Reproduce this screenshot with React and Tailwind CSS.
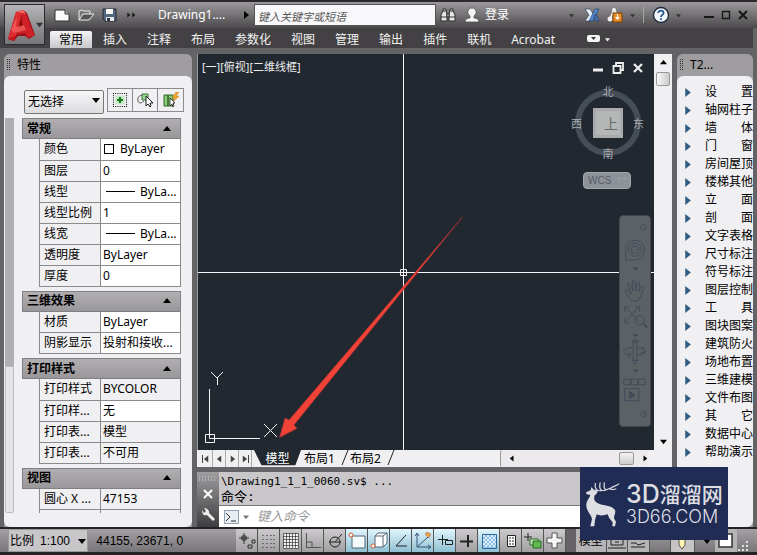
const ribbonTabs = ['常用', '插入', '注释', '布局', '参数化', '视图', '管理', '输出', '插件', '联机', 'Acrobat']

const sections = [
  {
    title: '常规',
    rows: [
      ['颜色', 'ByLayer', 'swatch'],
      ['图层', '0'],
      ['线型', 'ByLa...', 'line'],
      ['线型比例', '1'],
      ['线宽', 'ByLa...', 'line'],
      ['透明度', 'ByLayer'],
      ['厚度', '0'],
    ],
  },
  {
    title: '三维效果',
    rows: [
      ['材质', 'ByLayer'],
      ['阴影显示', '投射和接收...'],
    ],
  },
  {
    title: '打印样式',
    rows: [
      ['打印样式', 'BYCOLOR', 'readonly'],
      ['打印样...', '无'],
      ['打印表...', '模型', 'readonly'],
      ['打印表...', '不可用', 'readonly'],
    ],
  },
  {
    title: '视图',
    rows: [
      ['圆心 X ...', '47153', 'readonly'],
      ['圆心 Y ...', '21604', 'readonly'],
    ],
  },
]

const menuItems = [
  '设置', '轴网柱子', '墙体', '门窗', '房间屋顶', '楼梯其他', '立面', '剖面', '文字表格', '尺寸标注', '符号标注',
  '图层控制', '工具', '图块图案', '建筑防火', '场地布置', '三维建模', '文件布图', '其它', '数据中心', '帮助演示',
]

function Triangle({ dir = 'down', className = '' }) {
  const shapes = {
    down: '0,2 8,2 4,7',
    up: '0,6 8,6 4,1',
    right: '2,0 7,4 2,8',
    left: '6,0 1,4 6,8',
  }
  return (
    <svg viewBox="0 0 8 8" className={`shrink-0 ${className}`} fill="currentColor">
      <polygon points={shapes[dir]} />
    </svg>
  )
}

function Grip() {
  return (
    <svg className="h-3 w-1 shrink-0" viewBox="0 0 4 12" fill="#333">
      {[0, 2, 4, 6, 8, 10].map((y) => (
        <g key={y}>
          <rect x="0" y={y} width="1" height="1" />
          <rect x="2" y={y} width="1" height="1" />
        </g>
      ))}
    </svg>
  )
}

function AppButton() {
  return (
    <button
      aria-label="菜单"
      className="absolute left-1 top-1 flex h-[41px] w-[41px] items-center border border-[#2c2b2d] bg-linear-to-b from-[#b5b4b6] to-[#767577] pl-[3px]"
    >
      <svg className="h-[34px] w-[27px]" viewBox="0 0 27 34">
        <path d="M8 4 L15 2 L19 5 L27 27 L21 31 L17 28 L10 28 L6 33 L0 31Z" fill="#9d1016" />
        <path d="M8 4 L14 5 L8 28 L0 31Z" fill="#dd2b2f" />
        <path d="M14 5 L18 6 L26 27 L20 30 L17 25 L9 26 L10 21 L14 20Z" fill="#cf2228" />
        <path d="M8 4 L15 2 L18 6 L14 5Z" fill="#ff6763" />
        <path d="M3 22 L9 8 L8 19 L16 17 L18 22 L6 25Z" fill="#f2625f" opacity=".75" />
        <path d="M13 11L15 17L11 18Z" fill="#8d1015" />
        <path d="M0 31 L8 28 L6 33Z" fill="#c3161c" />
      </svg>
      <Triangle className="ml-px h-[7px] w-[7px] text-[#333]" />
    </button>
  )
}

function TitleBar() {
  return (
    <div className="flex h-7 items-center border-t-2 border-[#2d282d] bg-linear-to-b from-[#9b999c] via-[#747275] to-[#4b494c] pl-[54px] pr-2 text-white">
      <div className="flex w-16 justify-between">
        <button aria-label="新建">
          <svg className="h-4 w-4" viewBox="0 0 16 16">
            <path d="M1 3h10l4 4v7H1z" fill="#fafafa" stroke="#333" />
            <path d="M11 3v4h4" fill="#bbb" stroke="#333" />
          </svg>
        </button>
        <button aria-label="打开">
          <svg className="h-4 w-4" viewBox="0 0 16 16">
            <path d="M1 13V4l3-1 2 1h6v3" fill="#777" stroke="#eee" />
            <path d="M1 13l4-6h11l-5 6z" fill="#555" stroke="#eee" />
          </svg>
        </button>
        <button aria-label="保存">
          <svg className="h-4 w-4" viewBox="0 0 16 16">
            <path d="M1 2h13v12H3l-2-2z" fill="#52667d" stroke="#222a35" />
            <path d="M4 2h7v5H4z" fill="#f6f6f6" />
            <path d="M4 10h8v4H4z" fill="#e5e5e5" />
            <path d="M5 11h3v3H5z" fill="#334" />
          </svg>
        </button>
      </div>
      <button aria-label="更多" className="ml-2 flex text-[#171717]">
        <Triangle dir="right" className="h-[6px] w-[5px]" />
        <Triangle dir="right" className="h-[6px] w-[5px]" />
      </button>
      <span className="ml-[22px] w-[82px] text-[12px]">Drawing1....</span>
      <Triangle dir="right" className="ml-[2px] h-2 w-2 text-black" />
      <input
        aria-label="搜索"
        placeholder="键入关键字或短语"
        className="ml-1 h-[22px] min-w-0 flex-1 border border-[#555] bg-[#f8f7f9] px-[3px] pt-[2px] text-[11px] italic text-black placeholder:text-[#555]"
      />
      <button aria-label="查找" className="ml-1">
        <svg className="h-4 w-4" viewBox="0 0 16 16" fill="#e6e6e6" stroke="#222" strokeWidth=".9">
          <path d="M3 2h3v2l1 3v7H1V8l2-4zM10 2h3v2l2 4v6H9V7l1-3z" />
          <path d="M7 7h2v3H7zM1 10h6M9 10h6M3 4h3M10 4h3" />
        </svg>
      </button>
      <button className="ml-2 flex items-center gap-[5px] text-[12px]">
        <svg className="h-4 w-4" viewBox="0 0 16 16">
          <path d="M1 15c0-3 3-4 5-4V9C2 6 4 1 8 1s6 5 2 8v2c2 0 5 1 5 4z" fill="#f4f4f4" stroke="#444" strokeWidth=".7" />
        </svg>
        登录
      </button>
      <Triangle className="ml-[60px] h-[5px] w-[5px] text-[#333]" />
      <button aria-label="Exchange" className="ml-[10px]">
        <svg className="h-4 w-4" viewBox="0 0 16 16" stroke="#26354f" strokeWidth=".6">
          <path d="M1 2h5l4 6-4 6H1l4-6z" fill="#e5eefb" />
          <path d="M15 2h-4L5 14h4z" fill="#4f86cf" />
          <path d="M10 9l2-2 3 7h-4z" fill="#4273b8" />
        </svg>
      </button>
      <button aria-label="Autodesk 360" className="ml-[7px]">
        <svg className="h-4 w-4" viewBox="0 0 16 16">
          <path d="M3 12L7 3l4 6" fill="none" stroke="#eee" strokeWidth="2" />
          <circle cx="3" cy="12" r="2.5" fill="#eee" />
          <circle cx="7" cy="3" r="2" fill="#eee" />
          <rect x="6" y="6" width="9" height="9" fill="#e78c22" stroke="#7b420a" />
          <path d="M10 7h1v3h2l-2.500 3L8 10h2z" fill="#fff" />
        </svg>
      </button>
      <Triangle className="ml-[7px] h-[5px] w-[5px] text-[#333]" />
      <span className="ml-2 h-4 w-px bg-[#a5a5a5]" />
      <button aria-label="帮助" className="ml-2">
        <svg className="h-[18px] w-[18px]" viewBox="0 0 18 18">
          <circle cx="9" cy="9" r="7.5" fill="#f2f6fa" stroke="#1f2e40" strokeWidth="1.4" />
          <path d="M6.3 7C6.3 3.7 11.8 3.9 11.6 7c-.1 1.8-2.6 1.800-2.600 4M9 12.300v1.800" fill="none" stroke="#245a91" strokeWidth="1.8" />
        </svg>
      </button>
      <Triangle className="ml-[6px] h-[5px] w-[5px] text-[#333]" />
      <div className="ml-[22px] flex gap-[5px]">
        <button aria-label="最小化">
          <svg className="h-3 w-3" viewBox="0 0 12 12"><path d="M1 8h10" stroke="#171717" strokeWidth="2" /></svg>
        </button>
        <button aria-label="最大化">
          <svg className="h-3 w-3" viewBox="0 0 12 12"><path d="M2.500 2.500h7v7h-7z" fill="none" stroke="#171717" strokeWidth="1.4" /></svg>
        </button>
        <button aria-label="关闭">
          <svg className="h-3 w-3" viewBox="0 0 12 12"><path d="M2 2l8 8M10 2l-8 8" stroke="#171717" strokeWidth="2" /></svg>
        </button>
      </div>
    </div>
  )
}

function Ribbon() {
  return (
    <nav className="mr-1 flex h-5 items-center bg-[#434143] pl-[49px] pt-[2px] text-[12px] text-[#f2f2f2]">
      {ribbonTabs.map((tab, i) => (
        <button
          key={tab}
          className={
            i === 0
              ? 'mx-px h-[17px] self-end rounded-t-xs bg-linear-to-b from-[#f5f4f6] to-[#c9c8ca] px-[9px] leading-[17px] text-black'
              : 'px-[10px] leading-[17px]'
          }
        >
          {tab}
        </button>
      ))}
      <button aria-label="面板" className="ml-[22px] flex items-center gap-[5px]">
        <svg className="h-2 w-[13px]" viewBox="0 0 13 8">
          <rect width="13" height="7" rx="2" fill="#f5f5f5" />
          <path d="M4 2h5L6.500 5z" fill="#333" />
        </svg>
        <Triangle className="h-[5px] w-[5px]" />
      </button>
    </nav>
  )
}

function PanelTitle({ children }) {
  return (
    <div className="flex h-[22px] shrink-0 items-center gap-[6px] rounded-t-md bg-[#9f9d9f] pl-[3px] text-[12px] text-black">
      <Grip />
      {children}
    </div>
  )
}

const toolButton = 'flex w-[25px] items-center justify-center border-r border-[#8c8b8d] last:border-r-0'

function Properties() {
  return (
    <aside className="flex min-h-0 flex-col rounded-t-md bg-[#9f9d9f]">
      <PanelTitle>特性</PanelTitle>
      <div className="flex min-h-0 flex-1 flex-col rounded-md bg-[#f0eff1] pb-[14px] pt-3">
        <div className="ml-5 flex h-6 gap-[3px]">
          <div className="relative w-20">
            <select
              aria-label="选择对象"
              className="h-6 w-full appearance-none rounded-xs border border-[#777] bg-linear-to-b from-[#f6f5f7] to-[#dddcde] pl-[3px] text-[12px] leading-5"
            >
              <option>无选择</option>
            </select>
            <Triangle className="pointer-events-none absolute right-1 top-2 h-2 w-2" />
          </div>
          <div className="flex border border-[#8c8b8d]">
            <button aria-label="切换 PICKADD" className={toolButton}>
              <svg className="h-4 w-4" viewBox="0 0 16 16">
                <path d="M1 1.500h14M1 14.500h14M1.500 1v14M14.500 1v14" stroke="#111" strokeDasharray="1 1.200" />
                <rect x="3.500" y="3.500" width="9" height="9" fill="#c8e9c8" />
                <path d="M8 5v6M5 8h6" stroke="#127a1c" strokeWidth="2" />
              </svg>
            </button>
            <button aria-label="选择对象" className={toolButton}>
              <svg className="h-4 w-4" viewBox="0 0 16 16">
                <path d="M5 2h6v6H5z" fill="#9fd09a" stroke="#3a8137" />
                <path d="M6 3C2 3 0 6 1 9s4 2 6 0" fill="none" stroke="#555" />
                <path d="M9 4v10l2-2 2 3 1-1-1-3h3z" fill="#fff" stroke="#222" />
              </svg>
            </button>
            <button aria-label="快速选择" className={toolButton}>
              <svg className="h-4 w-4" viewBox="0 0 16 16">
                <path d="M1 3h4v11H1zM5 3h5v11H5z" fill="#8bc878" stroke="#2d6725" />
                <path d="M13 0l-4 6h3l-3 5 7-7h-3l3-4z" fill="#f5a72b" stroke="#a9650c" strokeWidth=".4" />
                <path d="M7 6v8l2-2 1 3 1-1-1-3h2z" fill="#fff" stroke="#222" strokeWidth=".8" />
              </svg>
            </button>
          </div>
        </div>
        <div className="mr-[11px] mt-[6px] flex min-h-0 flex-1 gap-2">
          <div className="ml-px flex w-[9px] shrink-0 flex-col">
            <div className="flex-[250] bg-[#b0aeb1]" />
            <div className="flex-[146] rounded-b-xs border border-[#bcbbbd] bg-[#e5e4e6]" />
          </div>
          <div className="flex min-w-0 flex-1 flex-col gap-1 overflow-hidden">
            {sections.map((section) => (
              <section key={section.title} className="shrink-0">
                <h2 className="flex h-[21px] items-center justify-between border border-[#807f81] bg-linear-to-b from-[#b1afb2] to-[#99979a] pl-1 pr-[9px] text-[12px] font-bold">
                  {section.title}
                  <Triangle dir="up" className="h-2 w-2" />
                </h2>
                <div className="pl-[17px]">
                  <table className="w-full table-fixed border-l border-[#8b8a8c] text-[12px] leading-5">
                    <tbody>
                      {section.rows.map(([label, value, kind], i) => (
                        <tr key={i} className="h-[21px]">
                          <th scope="row" className="w-[61px] whitespace-nowrap border-b border-r border-[#8b8a8c] p-0 pl-1 text-left font-normal">
                            {label}
                          </th>
                          <td
                            className={`overflow-hidden whitespace-nowrap border-b border-r border-[#8b8a8c] p-0 pl-[2px] ${
                              kind === 'readonly' ? 'bg-[#f0eff1]' : 'bg-white'
                            }`}
                          >
                            <span className="flex items-center">
                              {kind === 'swatch' && <i className="ml-px mr-[6px] h-[10px] w-[10px] border border-black" />}
                              {kind === 'line' && <i className="ml-[3px] mr-[5px] h-px w-[29px] bg-black" />}
                              {value}
                            </span>
                          </td>
                        </tr>
                      ))}
                    </tbody>
                  </table>
                </div>
              </section>
            ))}
          </div>
        </div>
      </div>
    </aside>
  )
}

function ViewCube() {
  return (
    <div className="absolute right-[10px] top-[30px] h-[78px] w-[74px] text-[11px] leading-4 text-[#a9adb2]">
      <svg className="absolute inset-0 h-full w-full" viewBox="0 0 74 78">
        <circle cx="38" cy="39" r="30" fill="none" stroke="#454d57" strokeWidth="6" />
        <path d="M23 24h30v30H23z" fill="#a9aaab" />
        <path d="M26 27h24v24H26z" fill="#b5b6b6" />
      </svg>
      <span className="absolute inset-x-0 top-0 pl-[2px] text-center">北</span>
      <span className="absolute inset-x-0 bottom-0 pl-[2px] text-center">南</span>
      <span className="absolute left-px top-8">西</span>
      <span className="absolute right-0 top-8">东</span>
      <span className="absolute inset-x-0 top-8 pl-2 text-center text-[14px] text-[#666b70]">上</span>
    </div>
  )
}

function NavBar() {
  return (
    <div className="absolute right-[3px] top-[161px] h-[212px] w-8 rounded-[4px] border border-[#42484c] bg-[#5b6164]">
      <svg className="h-full w-full" viewBox="0 0 32 212" fill="none" stroke="#414c5a">
        <circle cx="25" cy="6" r="3" />
        <path d="M6 41V30c0-6 4-10 10-10s10 4 10 10-4 11-10 11z" />
        <circle cx="16" cy="30" r="7" />
        <circle cx="16" cy="30" r="4" />
        <path d="M14 49h5l-2 3zM14 120h5l-2 3zM14 158h5l-2 3z" fill="#3b444e" stroke="none" />
        <path d="M12 84L6 76c-2-3 1-4 3-2l3 3-4-10c0-2 2-2 3 0l3 7-1-10c0-2 2-2 3 0l1 10 1-9c1-2 3-1 3 0l-1 10 3-6c1-1 3 0 2 2l-3 9-3 5z" />
        <path d="M6 92l15 15M20 91L6 107M5 96v-5h5M16 91h5v5M5 103v5h5" />
        <circle cx="21" cy="105" r="5" />
        <path d="M25 109l4 4" strokeWidth="2" />
        <path d="M14 128h4v20h-4zM13 128l3-3 3 3zM13 148l3 4 3-4z" />
        <path d="M13 134c-12 2-12 7-2 8M19 134c12 3 9 8-1 8M9 138l3 4-4 3M24 134l3 5-5 1" />
        <path d="M4 168h7v6H4zM12 168h7v6h-7zM20 168h7v6h-7zM5 178h15v13H5z" />
        <path d="M10 181l6 4-6 4z" fill="#414c5a" />
        <circle cx="25" cy="205" r="3" />
        <path d="M25 205h3" />
      </svg>
    </div>
  )
}

function Drawing() {
  return (
    <div className="relative min-w-0 flex-1 overflow-hidden bg-[#212830]">
      <svg className="absolute inset-0 h-full w-full" viewBox="0 0 456 396" preserveAspectRatio="xMinYMin slice">
        <g fill="none" stroke="#f5f5f5" strokeWidth="1">
          <path d="M205.500 0V396M0 218.500H456M202.500 215.500h6v6h-6z" />
          <path d="M11.500 335V384.500H62M7.500 380.500h9v8h-9z" />
          <path d="M13 318l6 6 6-6M19.500 324v7M66 370l13 13M79 370L66 383" />
        </g>
        <path d="M264.500 163L91 366L87 364L81.500 383.500L99 374.500L96 371Z" fill="#f04237" stroke="#9e3030" strokeWidth=".6" />
      </svg>
      <div className="absolute left-1 top-1 text-[11px] leading-[18px] text-[#eee]">[一][俯视][二维线框]</div>
      <div className="absolute right-[10px] top-2 flex gap-2">
        <button aria-label="最小化视图">
          <svg className="h-3 w-3" viewBox="0 0 12 12"><path d="M1 8h10" stroke="#eee" strokeWidth="3" /></svg>
        </button>
        <button aria-label="还原视图">
          <svg className="h-3 w-3" viewBox="0 0 12 12"><path d="M4 4V1h7v7H8M1.500 4h7v7h-7z" fill="none" stroke="#eee" strokeWidth="1.800" /></svg>
        </button>
        <button aria-label="关闭视图">
          <svg className="h-3 w-3" viewBox="0 0 12 12"><path d="M2 2l8 8M10 2l-8 8" stroke="#eee" strokeWidth="2.200" /></svg>
        </button>
      </div>
      <ViewCube />
      <button className="absolute right-[23px] top-[118px] h-[17px] w-12 rounded-sm border border-[#a3a6ac] bg-[#8e9299] pl-1 text-left font-['Liberation_Sans',sans-serif] text-[10px] leading-[15px] text-[#575c65]">
        WCS
        <i className="absolute right-1 top-[5px] h-[5px] w-2 border-t border-dashed border-[#a8abb1]" />
      </button>
      <NavBar />
    </div>
  )
}

function LayoutTabs() {
  const slash = (
    <svg className="ml-[6px] h-full w-2 shrink-0" viewBox="0 0 8 17"><path d="M7 0L1 15" stroke="#222" /></svg>
  )
  return (
    <div className="flex h-[17px] items-stretch bg-[#f0eff1] pl-[3px] text-[12px] leading-[16px]">
      {['first', 'left', 'right', 'last'].map((d) => (
        <button key={d} aria-label={d} className="flex w-[13px] items-center justify-center border-r border-[#aaa] text-[#444]">
          {d === 'first' && <i className="h-2 w-px bg-[#444]" />}
          <Triangle dir={d === 'first' || d === 'left' ? 'left' : 'right'} className="h-2 w-[7px]" />
          {d === 'last' && <i className="h-2 w-px bg-[#444]" />}
        </button>
      ))}
      <button className="ml-[2px] w-[47px] bg-[#212830] text-white [clip-path:polygon(0_0,100%_0,88%_90%,16%_90%)]">模型</button>
      <button className="ml-[3px] shrink-0">布局1</button>
      {slash}
      <button className="ml-px shrink-0">布局2</button>
      {slash}
      <div className="ml-auto mr-6 flex w-[148px] items-center rounded-l-xs border-l border-[#999] bg-[#eceaed] pl-2">
        <Triangle dir="left" className="h-[7px] w-[6px]" />
        <span className="ml-auto h-[13px] w-[15px] rounded-xs border border-[#999] bg-linear-to-b from-[#f5f5f5] to-[#ccc]" />
        <Triangle dir="right" className="ml-2 h-[7px] w-[6px]" />
      </div>
    </div>
  )
}

function CommandLine() {
  return (
    <div className="mr-[-5px] flex h-[55px] bg-white font-['DejaVu_Sans_Mono','Noto_Sans_CJK_SC',monospace] text-[11px]">
      <div className="flex w-[22px] flex-col items-center justify-between bg-linear-to-b from-[#a09ea1] to-[#3e3d3f] py-1">
        <svg className="h-[5px] w-[18px]" viewBox="0 0 18 5"><path d="M0 1h18M0 4h18" stroke="#ddd" strokeDasharray="1 2" /></svg>
        <button aria-label="关闭">
          <svg className="h-[10px] w-[10px]" viewBox="0 0 10 10"><path d="M1 1l8 8M9 1L1 9" stroke="#fff" strokeWidth="2" /></svg>
        </button>
        <button aria-label="自定义">
          <svg className="h-4 w-4" viewBox="0 0 16 16">
            <path d="M2 3c0 5 3 6 5 5l6 6 2-2-6-6c1-2-2-5-5-5l2 3-2 2z" fill="#eee" />
          </svg>
        </button>
      </div>
      <div className="flex min-w-0 flex-1 flex-col">
        <div className="h-[34px] border-b border-[#777] bg-[#c9c7ca] px-[2px] pt-[2px] leading-[15px]">
          <p>\Drawing1_1_1_0060.sv$ ...</p>
          <p className="text-[13px]">命令:</p>
        </div>
        <label className="flex flex-1 items-center pl-[5px]">
          <svg className="h-[14px] w-[15px]" viewBox="0 0 15 14">
            <rect x=".5" y=".5" width="14" height="13" fill="#e6edf3" stroke="#91a2b1" />
            <path d="M2 3l4 4-4 4M7 11h5" fill="none" stroke="#333" />
          </svg>
          <Triangle className="ml-1 h-[6px] w-[6px] text-[#777]" />
          <input aria-label="命令" placeholder="键入命令" className="ml-2 min-w-0 max-w-60 flex-1 text-[13px] italic placeholder:text-[#999]" />
        </label>
      </div>
    </div>
  )
}

function Menu() {
  return (
    <aside className="flex min-h-0 flex-col overflow-hidden rounded-t-md bg-[#9f9d9f]">
      <PanelTitle>T2...</PanelTitle>
      <ul className="min-h-0 flex-1 rounded-md bg-[#f0eff1] pt-[7px] text-[12px] leading-[18px]">
        {menuItems.map((item) => (
          <li key={item}>
            <button className="flex h-[18px] w-full items-center pl-[6px]">
              <Triangle dir="right" className="h-[9px] w-[9px] text-[#315d82]" />
              <span className="ml-[13px] flex w-12 shrink-0 justify-between">
                {item.length === 2 ? [...item].map((c) => <span key={c}>{c}</span>) : item}
              </span>
            </button>
          </li>
        ))}
      </ul>
    </aside>
  )
}

const statusTools = [
  { name: '捕捉', art: <path d="M7 2v11M2 7h10M5 5h4v4H5zM15 9h3v3h-3zM11 14h4v3h-4z" strokeWidth=".9" /> },
  { name: '网格点', art: <path d="M4 4v13M8 4v13M12 4v13M15 4v13" strokeDasharray="1 3" /> },
  { name: '栅格', art: <path d="M2.500 2.500h15v15h-15zM5.500 2v15M8.500 2v15M11.500 2v15M14.500 2v15M2 5.500h15M2 8.500h15M2 11.500h15M2 14.500h15" fill="#f2f2f2" stroke="#333" strokeWidth=".7" /> },
  { name: '正交', art: <path d="M3.500 2v14.500H18M3 11h6v5" stroke="#555" /> },
  { name: '极轴', art: <g><circle cx="10" cy="11" r="5" /><path d="M4 11h12M10 11l7-8" /></g> },
  { name: '对象捕捉', on: true, art: <g><path d="M5 5h13v12H5z" fill="#f4fafc" stroke="#567" /><circle cx="4" cy="4" r="2" fill="#fff" stroke="#d35b2c" /></g> },
  { name: '三维捕捉', on: true, art: <g><path d="M6 5l3-3h9v10l-4 4H6zM6 5h8v11M14 5l4-3" fill="#fff" stroke="#567" /><circle cx="4" cy="15" r="2" fill="#fff" stroke="#d35b2c" /></g> },
  { name: '追踪', on: true, art: <path d="M15 4L5 15h11" /> },
  { name: 'UCS', on: true, art: <g><path d="M4 3v13h13M4 16L15 6M2 5l2-3 2 3M15 14l3 2-3 2" stroke="#357" /><path d="M12 3l4 4 2-4-4-2z" fill="#e7a13a" stroke="#a77" strokeWidth=".6" /></g> },
  { name: '动态输入', on: true, art: <path d="M3 8.500h10M7.500 4v10M10.500 9.500h7v4h-7z" /> },
  { name: '线宽', art: <path d="M3 10.500h13M11 4v12" strokeWidth="2" /> },
  { name: '透明度', on: true, art: <g><path d="M3.500 3.500h14v14h-14z" fill="#8fbfe6" stroke="#2d6999" /><path d="M4 5h13M4 9h13M4 13h13" stroke="#d9eefc" strokeWidth="2" strokeDasharray="2 2" /><path d="M6 7h11M6 11h11M6 15h11" stroke="#d9eefc" strokeWidth="2" strokeDasharray="2 2" /></g> },
  { name: '快捷特性', art: <g><path d="M6.500 4.500h8v11h-8z" fill="#fff" /><path d="M8 7h5M8 10h5M8 13h5" strokeDasharray="2 1" /></g> },
  { name: '选择循环', art: <g><path d="M5 2v8M1 6h8" /><path d="M7 8h8v6H7z" fill="#c8e8c0" stroke="#276b22" /><path d="M10 10h8v7h-8z" fill="#63b951" stroke="#276b22" /></g> },
  { name: '注释监视器', art: <path d="M7 2h5v5h5v5h-5v5H7v-5H2V7h5z" fill="#f6f6f6" stroke="#555" /> },
]

function StatusBar() {
  return (
    <footer className="flex h-7 items-stretch border-b-3 border-t-2 border-[#252326] bg-linear-to-b from-[#a3a1a4] to-[#777578] px-2 text-[12px]">
      <button className="flex w-[81px] items-center border border-[#999] bg-[#c8c6c9] pl-px">
        比例
        <span className="ml-[6px] font-['Liberation_Sans',sans-serif]">1:100</span>
        <Triangle className="ml-2 h-2 w-2" />
      </button>
      <span className="flex w-[149px] items-center pl-2 font-['Liberation_Sans',sans-serif]">44155, 23671, 0</span>
      {statusTools.map((tool) => (
        <button
          key={tool.name}
          aria-label={tool.name}
          className={`flex w-[22px] shrink-0 items-center justify-center border-r border-[#555] ${
            tool.on ? 'bg-linear-to-b from-[#e0f5fc] to-[#8fc0d3]' : 'bg-linear-to-b from-[#cccacd] to-[#a19fa2]'
          }`}
        >
          <svg className="h-5 w-5" viewBox="0 0 20 20" fill="none" stroke="#222">{tool.art}</svg>
        </button>
      ))}
      <span className="w-[10px] bg-[#656366]" />
      <button className="w-[30px] bg-[#b5b3b6]">模型</button>
      <button aria-label="快速查看布局" className="w-[22px] border-x border-[#555] bg-[#b5b3b6]">
        <svg className="h-5 w-5" viewBox="0 0 20 20" fill="none" stroke="#222"><path d="M4 4h12v10H4zM1 17h18M8 11h4" /></svg>
      </button>
      <button aria-label="快速查看图形" className="w-[22px] border-r border-[#555] bg-[#b5b3b6]">
        <svg className="h-5 w-5" viewBox="0 0 20 20" fill="none" stroke="#222"><path d="M3 12h5l2 2 7-2M3 16h14" /></svg>
      </button>
      <button aria-label="注释比例" className="ml-5 w-[26px] border-x border-[#555] bg-[#c5c3c6]">
        <svg className="mx-auto h-5 w-5" viewBox="0 0 20 20"><path d="M7 8h6v6l-3 4-3-4z" fill="#fff4ae" stroke="#555" /></svg>
      </button>
      <Triangle className="ml-2 h-2 w-2 self-center" />
      <button aria-label="全屏" className="ml-1 w-[22px] bg-[#b5b3b6]">
        <svg className="h-5 w-5" viewBox="0 0 20 20"><path d="M4 3h13v13H4z" fill="#fff" stroke="#333" strokeWidth="1.500" /></svg>
      </button>
      <svg className="ml-auto h-3 w-3 self-end" viewBox="0 0 12 12" fill="#e5e5e5">
        <path d="M9 1h2v2H9zM5 5h2v2H5zM9 5h2v2H9zM1 9h2v2H1zM5 9h2v2H5zM9 9h2v2H9z" />
      </svg>
    </footer>
  )
}

function Watermark() {
  return (
    <div className="absolute bottom-[15px] right-[29px] flex h-[73px] w-[148px] items-center gap-[6px] bg-[#212c55] pl-[5px] text-[#dedfe2]">
      <svg className="h-[46px] w-[35px] shrink-0" viewBox="75 118 105 138">
        <path
          d="M78 152L92 146L94 136L102 145L113 149L110 156L104 161C99 175 106 184 125 189C145 192 163 195 166 209C166 219 160 225 163 232L168 240L165 254H157L158 242L148 230L143 218C130 223 117 222 110 218L105 235L103 254H91L96 232C94 219 80 210 79 192C78 178 89 169 91 160L80 158Z"
          fill="currentColor"
        />
        <path
          d="M103 145C121 150 139 146 154 138C163 132 169 134 177 126M115 147C100 138 107 132 106 124M125 147C113 136 122 130 120 122M138 145C126 136 136 130 132 122M149 141C158 147 163 141 169 142"
          fill="none"
          stroke="currentColor"
          strokeWidth="3.500"
        />
      </svg>
      <div className="whitespace-nowrap">
        <p className="flex items-center text-[21px] font-medium leading-[26px]">
          <span className="font-['Inter',sans-serif] text-[25px]">3D</span>溜溜网
        </p>
        <p className="font-['Inter',sans-serif] text-[18px] font-light leading-5">3D66.COM</p>
      </div>
    </div>
  )
}

export default function App() {
  return (
    <div className="relative flex h-screen flex-col overflow-hidden bg-[#646365] font-['Noto_Sans','Noto_Sans_CJK_SC',sans-serif] text-black">
      <TitleBar />
      <Ribbon />
      <AppButton />
      <main className="grid min-h-0 flex-1 grid-cols-[188px_minmax(0,1fr)_76px] grid-rows-[minmax(0,1fr)] gap-[5px] px-1 pt-[6px]">
        <Properties />
        <div className="flex min-h-0 flex-col">
          <div className="flex min-h-0 flex-1 border-l border-[#999]">
            <Drawing />
            <div className="flex w-[18px] flex-col items-center bg-[#f0eff1] py-[5px]">
              <Triangle dir="up" className="h-[7px] w-[7px]" />
              <span className="mt-[6px] h-[14px] w-[14px] rounded-xs border border-[#999] bg-linear-to-r from-[#f8f8f8] to-[#ccc]" />
              <Triangle className="mt-auto h-[7px] w-[7px]" />
            </div>
          </div>
          <LayoutTabs />
          <div className="h-[5px] shrink-0" />
          <CommandLine />
        </div>
        <Menu />
      </main>
      <StatusBar />
      <Watermark />
    </div>
  )
}
